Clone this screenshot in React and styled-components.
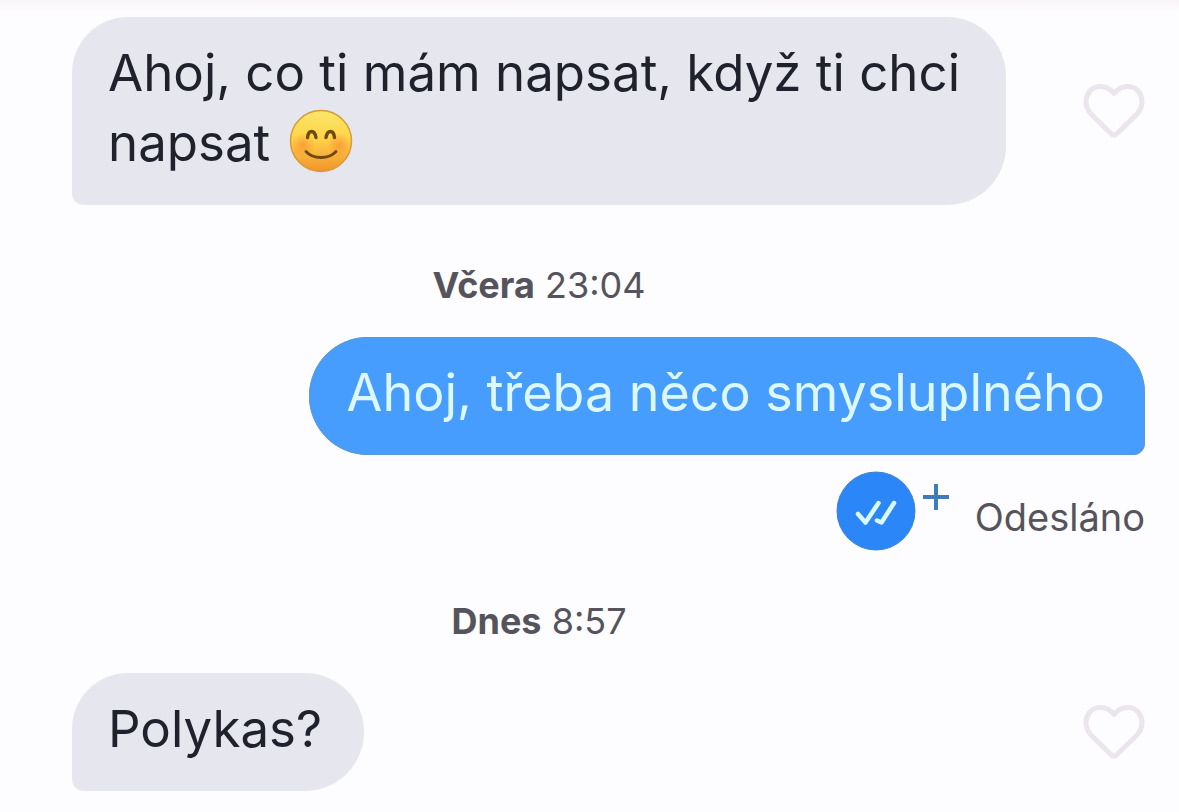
import { useState } from "react";
import styled, { createGlobalStyle } from "styled-components";

const GlobalStyle = createGlobalStyle`
  body {
    margin: 0;
    background: #fdfcfe;
    font-family: Inter, "Liberation Sans", sans-serif;
  }
`;

const Chat = styled.main`
  display: flex;
  flex-direction: column;
  min-height: 100vh;
  box-sizing: border-box;
  padding: 17px 34px 20px 72px;
  background: linear-gradient(#f7f5f8, #fdfcfe 12px);
`;

const Row = styled.div`
  display: flex;
  align-items: center;
  justify-content: ${(props) => (props.$mine ? "flex-end" : "space-between")};
  gap: 77px;
`;

const Bubble = styled.p`
  margin: 0;
  padding: ${(props) => (props.$mine ? "21px 40px 27px 38px" : "21px 42px 27px 36px")};
  border-radius: ${(props) => (props.$mine ? "59px 56px 12px 59px" : "56px 59px 59px 12px")};
  background: ${(props) => (props.$mine ? "#479dfd" : "#e6e6ef")};
  box-shadow: ${(props) => (props.$mine ? "inset 0 0 1px 1px #5f98cf" : "none")};
  color: ${(props) => (props.$mine ? "#dcf8fb" : "#1f222d")};
  font-size: ${(props) => (props.$mine ? "52px" : "51px")};
  line-height: 70px;
`;

const Emoji = styled.svg`
  width: 64px;
  height: 64px;
  margin-left: 4px;
  vertical-align: -12px;
`;

const LikeButton = styled.button`
  display: flex;
  flex: none;
  padding: 0;
  border: none;
  background: none;
  cursor: pointer;

  svg {
    width: 62px;
    height: 56px;
  }
`;

const Stamp = styled.time`
  margin: ${(props) => (props.$late ? "46px" : "56px")} 139px 28px 0;
  color: #55545c;
  font-size: 36px;
  line-height: 48px;
  text-align: center;
`;

const Status = styled.div`
  display: flex;
  justify-content: flex-end;
  margin-top: 16px;
  color: #55545c;
  font-size: 38px;
  line-height: 48px;
`;

const Seen = styled.svg`
  width: 80px;
  height: 80px;
`;

const Plus = styled.svg`
  width: 28px;
  height: 28px;
  margin: 12px 25px 0 6px;
`;

const StatusText = styled.span`
  margin-top: 22px;
`;

const Smile = () => (
  <Emoji viewBox="0 0 64 64" role="img" aria-label="😊">
    <defs>
      <linearGradient id="face" x1="0" y1="0" x2="0" y2="1">
        <stop offset="0" stopColor="#fbe66a" />
        <stop offset="0.45" stopColor="#fdd548" />
        <stop offset="1" stopColor="#f2932c" />
      </linearGradient>
      <radialGradient id="blush">
        <stop offset="0" stopColor="#f98332" stopOpacity="0.6" />
        <stop offset="1" stopColor="#f98332" stopOpacity="0" />
      </radialGradient>
    </defs>
    <circle cx="32" cy="32" r="30.5" fill="url(#face)" stroke="#d79a3c" strokeWidth="1.5" />
    <circle cx="14" cy="36" r="12" fill="url(#blush)" />
    <circle cx="50" cy="36" r="12" fill="url(#blush)" />
    <g fill="none" stroke="#71480f" strokeLinecap="round">
      <path d="M18.500 28.500C19.500 20.500 25.500 20.500 27 28.500" strokeWidth="3.4" />
      <path d="M37 28.500C38.500 20.500 44.500 20.500 45.500 28.500" strokeWidth="3.4" />
      <path d="M17 42.500C24 50.500 40 50.500 47 42.500" strokeWidth="2.800" />
    </g>
  </Emoji>
);

const Like = () => {
  const [liked, setLiked] = useState(false);

  return (
    <LikeButton aria-label="To se mi líbí" aria-pressed={liked} onClick={() => setLiked(!liked)}>
      <svg viewBox="0 0 62 56" fill={liked ? "#e9e0ea" : "none"}>
        <path
          d="M31 10.500C26 4 20 3 15.500 3.500C8 4.500 3 11 3 18.500C3 24 5 28 9 32L28.500 51C30 52.500 32 52.500 33.500 51L53 32C57 28 59 24 59 18.500C59 11 54 4.500 46.500 3.500C42 3 36 4 31 10.500Z"
          stroke="#ebe5ed"
          strokeWidth="5"
          strokeLinejoin="round"
        />
      </svg>
    </LikeButton>
  );
};

const App = () => {
  return (
    <>
      <GlobalStyle />
      <Chat>
        <Row>
          <Bubble>
            Ahoj, co ti mám napsat, když ti chci napsat <Smile />
          </Bubble>
          <Like />
        </Row>
        <Stamp>
          <b>Včera</b> 23:04
        </Stamp>
        <Row $mine>
          <Bubble $mine>Ahoj, třeba něco smysluplného</Bubble>
        </Row>
        <Status>
          <Seen viewBox="0 0 80 80" aria-hidden="true">
            <circle cx="40" cy="40" r="39" fill="#2b87f8" stroke="#3b82d0" strokeWidth="1" />
            <g fill="none" stroke="#d9f8ff" strokeWidth="4.5" strokeLinecap="round" strokeLinejoin="round">
              <path d="M22 43L29.500 51.500L42.500 32" />
              <path d="M41 49.500L45.500 51.500L58 32" />
            </g>
          </Seen>
          <Plus viewBox="0 0 28 28" aria-hidden="true">
            <path d="M14 1V27M1 14H27" stroke="#3f7db9" strokeWidth="4" />
          </Plus>
          <StatusText>Odesláno</StatusText>
        </Status>
        <Stamp $late>
          <b>Dnes</b> 8:57
        </Stamp>
        <Row>
          <Bubble>Polykas?</Bubble>
          <Like />
        </Row>
      </Chat>
    </>
  );
};

export default App;
